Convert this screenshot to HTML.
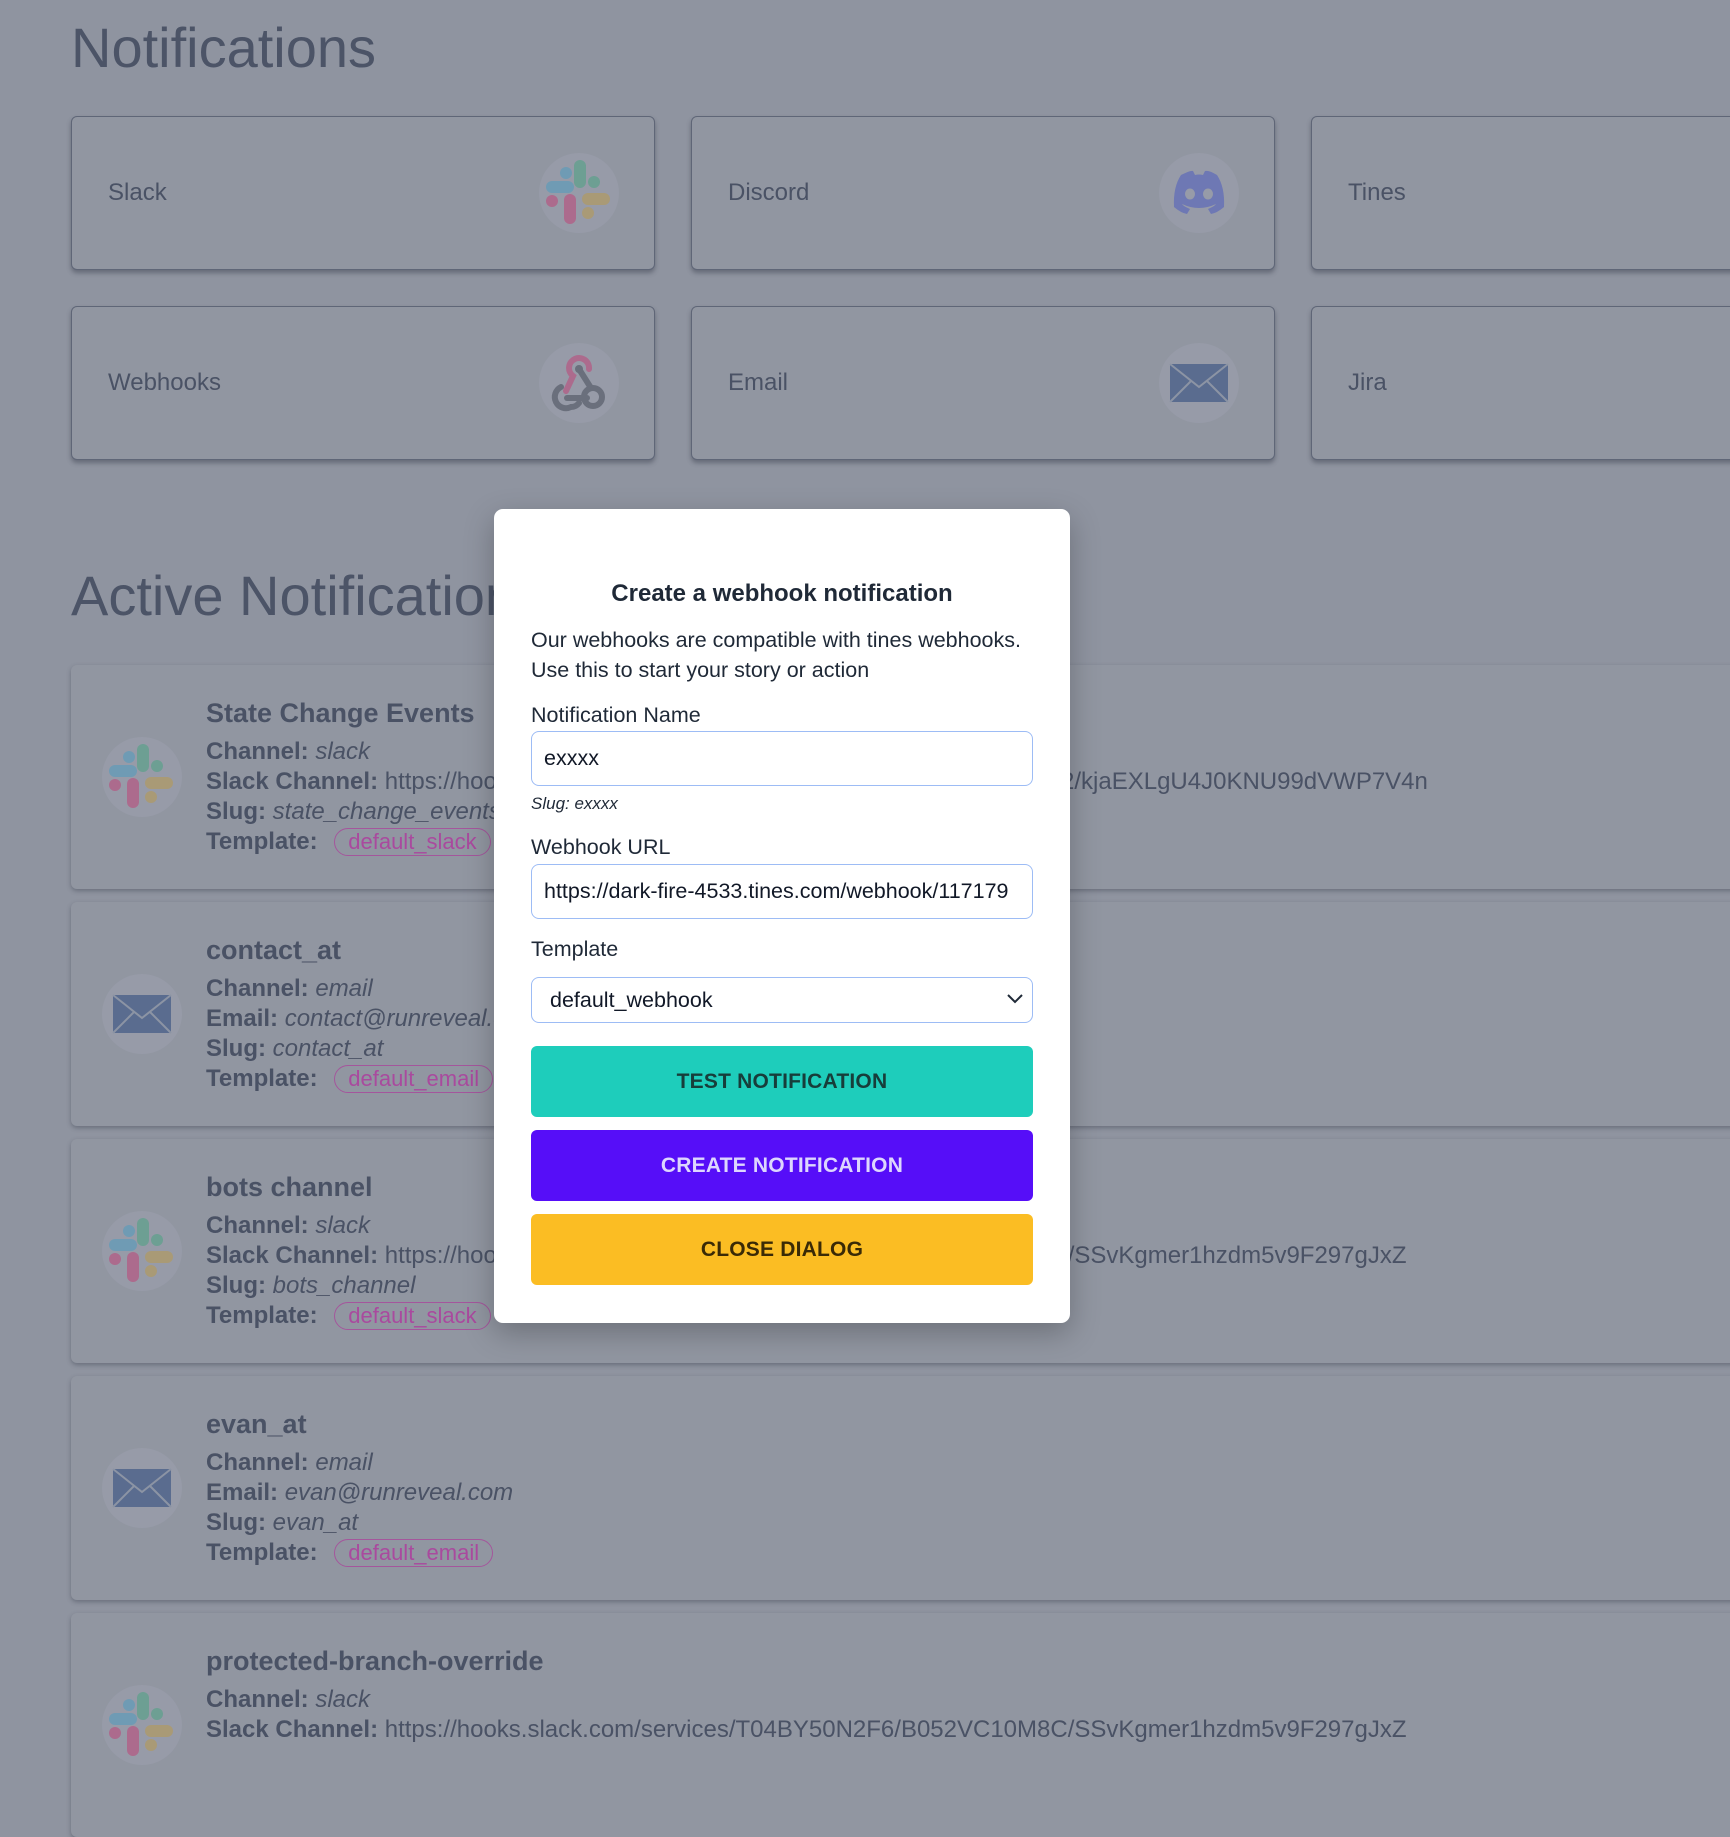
<!DOCTYPE html>
<html><head><meta charset="utf-8"><style>
*{box-sizing:border-box;margin:0;padding:0}
body{width:1730px;height:1746px;overflow:hidden;background:#8f94a0;font-family:"Liberation Sans",Arial,sans-serif;position:relative;color:#4a5265}
.h1{position:absolute;left:71px;font-size:56px;color:#4c5467;font-weight:400}
.card{position:absolute;width:584px;height:154px;border:1.5px solid #5f6677;border-radius:6px;background:#9196a1;box-shadow:0 3px 5px rgba(50,55,70,.45)}
.card .lab{position:absolute;left:36px;top:0;line-height:151px;font-size:24px;color:#4a5265}
.ic{position:absolute;width:80px;height:80px;border-radius:50%;background:#979ba8;display:flex;align-items:center;justify-content:center}
.card .ic{left:467px;top:36px}
.ac{position:absolute;left:71px;width:1700px;height:224px;border-radius:6px;background:#9196a1;box-shadow:0 2px 5px rgba(50,55,70,.4)}
.ac .ic{left:31px;top:72px}
.ac .t{position:absolute;left:135px;top:31px;font-size:27px;font-weight:700;line-height:34px;color:#4a5265;white-space:nowrap}
.ac .l{position:absolute;left:135px;top:72px;font-size:24px;line-height:30px;white-space:nowrap;color:#4a5265}
.ac b{font-weight:700}
.ac i{font-style:italic}
.pill{display:inline-block;border:1.5px solid #a4569c;color:#a94a9e;border-radius:16px;padding:0 13px;line-height:26px;margin-left:10px;font-size:22px}
.modal{position:absolute;left:494px;top:509px;width:576px;height:814px;background:#fff;border-radius:9px;box-shadow:0 10px 30px rgba(0,0,0,.25);color:#1f2937}
.in{position:absolute;left:37px;width:502px;border:1.5px solid #9dbcf5;border-radius:8px;font-size:21.5px;color:#111827;padding-left:12px;display:flex;align-items:center}
.btn{position:absolute;left:37px;width:502px;height:71px;border-radius:6px;font-weight:700;font-size:21px;display:flex;align-items:center;justify-content:center;letter-spacing:.2px}
.fl{position:absolute;left:37px;font-size:21.5px;line-height:24px}
</style></head><body>
<svg width="0" height="0" style="position:absolute">
<defs>
<g id="slack">
<rect x="-33" y="-12" width="28" height="12" rx="6" fill="#6f9bb4"/>
<rect x="-19" y="-26" width="12" height="12" rx="6" fill="#6f9bb4"/>
<rect x="-5" y="-33" width="12" height="28" rx="6" fill="#6d9f93"/>
<rect x="9" y="-17" width="12" height="12" rx="6" fill="#6d9f93"/>
<rect x="3" y="0" width="28" height="12" rx="6" fill="#a99a76"/>
<rect x="3" y="14" width="12" height="12" rx="6" fill="#a99a76"/>
<rect x="-15" y="1" width="12" height="30" rx="6" fill="#ac6b8d"/>
<rect x="-33" y="2" width="12" height="12" rx="6" fill="#ac6b8d"/>
</g>
<g id="mail">
<rect x="-29" y="-19" width="58" height="38" fill="#5a6c8f"/>
<path d="M-29 -19 L0 4 L29 -19 M-29 19 L-8 -2 M29 19 L8 -2" stroke="#8c94a4" stroke-width="2" fill="none"/>
</g>
</defs></svg>

<div class="h1" style="top:15px">Notifications</div>

<div class="card" style="left:71px;top:116px"><div class="lab">Slack</div><div class="ic"><svg width="80" height="80" viewBox="-40 -40 80 80"><use href="#slack"/></svg></div></div>
<div class="card" style="left:691px;top:116px"><div class="lab">Discord</div><div class="ic"><svg width="60" height="48" viewBox="0 0 60 48"><path d="M12 6 Q22 1 24 2 L26 6 Q30 5 34 6 L36 2 Q40 1 48 6 Q56 18 55 38 Q48 44 42 45 L39 40 Q46 37 47 35 Q30 43 13 35 Q14 37 21 40 L18 45 Q12 44 5 38 Q4 18 12 6Z" fill="#6e78b4"/><ellipse cx="21" cy="25" rx="5" ry="5.5" fill="#979ba8"/><ellipse cx="39" cy="25" rx="5" ry="5.5" fill="#979ba8"/></svg></div></div>
<div class="card" style="left:1311px;top:116px;width:500px"><div class="lab">Tines</div></div>

<div class="card" style="left:71px;top:306px"><div class="lab">Webhooks</div><div class="ic"><svg width="64" height="64" viewBox="0 0 64 64" fill="none" stroke-linecap="round"><path d="M42 18 A10 10 0 1 0 26 25 L19 40" stroke="#ac6b8d" stroke-width="6"/><path d="M32 18 L44 37" stroke="#6a6f7c" stroke-width="6"/><circle cx="32" cy="18" r="4" fill="#6a6f7c"/><circle cx="46" cy="46" r="9" stroke="#6a6f7c" stroke-width="6"/><path d="M20 47 H40" stroke="#6a6f7c" stroke-width="6"/><path d="M14 36 A11 11 0 0 0 24 56 A10 10 0 0 0 32 52" stroke="#6a6f7c" stroke-width="6"/></svg></div></div>
<div class="card" style="left:691px;top:306px"><div class="lab">Email</div><div class="ic"><svg width="80" height="80" viewBox="-40 -40 80 80"><use href="#mail"/></svg></div></div>
<div class="card" style="left:1311px;top:306px;width:500px"><div class="lab">Jira</div></div>

<div class="h1" style="top:563px">Active Notifications</div>

<div class="ac" style="top:665px"><div class="ic"><svg width="80" height="80" viewBox="-40 -40 80 80"><use href="#slack"/></svg></div>
<div class="t">State Change Events</div>
<div class="l"><b>Channel:</b> <i>slack</i><br><b>Slack Channel:</b> https://hooks.slack.com/services/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<br><b>Slug:</b> <i>state_change_events</i><br><b>Template:</b> <span class="pill">default_slack</span></div></div>

<div class="ac" style="top:902px"><div class="ic"><svg width="80" height="80" viewBox="-40 -40 80 80"><use href="#mail"/></svg></div>
<div class="t">contact_at</div>
<div class="l"><b>Channel:</b> <i>email</i><br><b>Email:</b> <i>contact@runreveal.com</i><br><b>Slug:</b> <i>contact_at</i><br><b>Template:</b> <span class="pill">default_email</span></div></div>

<div class="ac" style="top:1139px"><div class="ic"><svg width="80" height="80" viewBox="-40 -40 80 80"><use href="#slack"/></svg></div>
<div class="t">bots channel</div>
<div class="l"><b>Channel:</b> <i>slack</i><br><b>Slack Channel:</b> https://hooks.slack.com/services/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<br><b>Slug:</b> <i>bots_channel</i><br><b>Template:</b> <span class="pill">default_slack</span></div></div>

<div class="ac" style="top:1376px"><div class="ic"><svg width="80" height="80" viewBox="-40 -40 80 80"><use href="#mail"/></svg></div>
<div class="t">evan_at</div>
<div class="l"><b>Channel:</b> <i>email</i><br><b>Email:</b> <i>evan@runreveal.com</i><br><b>Slug:</b> <i>evan_at</i><br><b>Template:</b> <span class="pill">default_email</span></div></div>

<div class="ac" style="top:1613px"><div class="ic"><svg width="80" height="80" viewBox="-40 -40 80 80"><use href="#slack"/></svg></div>
<div class="t">protected-branch-override</div>
<div class="l"><b>Channel:</b> <i>slack</i><br><b>Slack Channel:</b> https://hooks.slack.com/services/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</div></div>

<div class="modal">
<div style="position:absolute;left:0;right:0;top:71px;text-align:center;font-size:24px;font-weight:700;line-height:28px">Create a webhook notification</div>
<div style="position:absolute;left:37px;top:116px;font-size:21.5px;line-height:30px">Our webhooks are compatible with tines webhooks.<br>Use this to start your story or action</div>
<div class="fl" style="top:194px">Notification Name</div>
<div class="in" style="top:222px;height:55px">exxxx</div>
<div style="position:absolute;left:37px;top:284px;font-size:17px;font-style:italic;line-height:22px">Slug: exxxx</div>
<div class="fl" style="top:326px">Webhook URL</div>
<div class="in" style="top:355px;height:55px;overflow:hidden;white-space:nowrap">https://dark-fire-4533.tines.com/webhook/117179</div>
<div class="fl" style="top:428px">Template</div>
<div class="in" style="top:468px;height:46px;padding-left:18px">default_webhook<svg style="position:absolute;right:8px;top:15px" width="18" height="12" viewBox="0 0 18 12"><path d="M2 2 L9 9 L16 2" stroke="#1f2937" stroke-width="2" fill="none"/></svg></div>
<div class="btn" style="top:537px;background:#1ecdbb;color:#173d3a">TEST NOTIFICATION</div>
<div class="btn" style="top:621px;background:#560ef8;color:#ddd6fe">CREATE NOTIFICATION</div>
<div class="btn" style="top:705px;background:#fbbd23;color:#3a2a06">CLOSE DIALOG</div>
</div>
</body></html>
